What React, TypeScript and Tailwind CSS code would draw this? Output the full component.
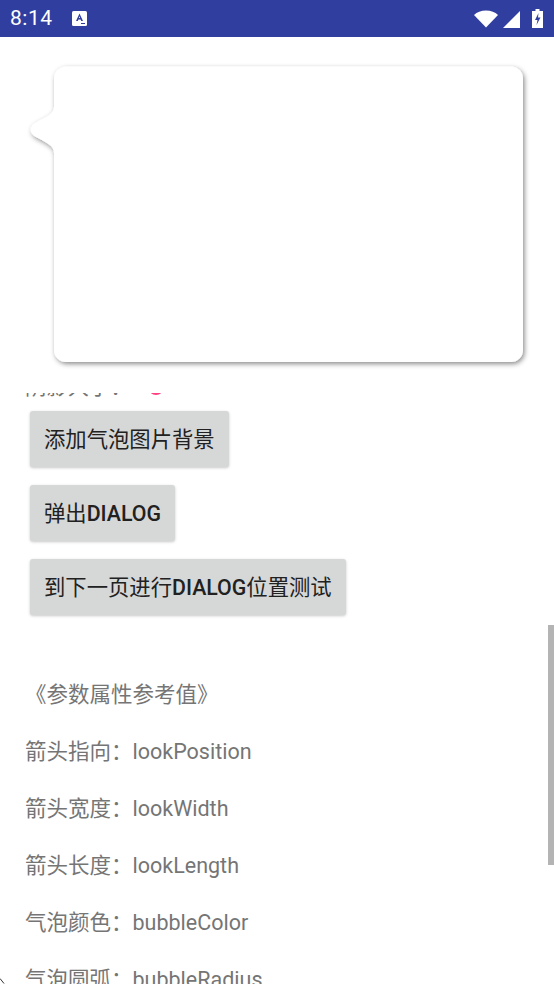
const FONT = "font-['Roboto','Noto_Sans_CJK_SC',sans-serif]";

const COLON = '\uFF1A';

const PARAMS = [
  ['箭头指向', 'lookPosition'],
  ['箭头宽度', 'lookWidth'],
  ['箭头长度', 'lookLength'],
  ['气泡颜色', 'bubbleColor'],
  ['气泡圆弧', 'bubbleRadius'],
];

function StatusBar() {
  return (
    <div className="h-[37px] shrink-0 bg-[#303f9f] flex items-center pl-[10px] pr-[11px] text-white">
      <span className="text-[21px] leading-none tracking-[0.5px]">8:14</span>
      <svg className="ml-[19px]" width="15" height="15" viewBox="0 0 15 15">
        <rect width="15" height="15" rx="1.5" fill="#fff" />
        <path d="M7.5 2.5 4 10h1.8l.6-1.5h2.2l.6 1.5H11L7.5 2.5Zm-.6 4.6.6-1.8.6 1.8H6.900Z" fill="#303f9f" />
        <rect x="9" y="12" width="4" height="1" fill="#303f9f" />
      </svg>
      <div className="ml-auto flex items-center">
        <svg width="24" height="18" viewBox="0 0 24 18">
          <path d="M0 5C3 2 7 .5 12 .5S21 2 24 5L12 17.500 0 5Z" fill="#fff" />
        </svg>
        <svg className="ml-[5px]" width="17" height="18" viewBox="0 0 17 18">
          <path d="M0 18 17 1v17H0Z" fill="#fff" />
        </svg>
        <svg className="ml-[12px]" width="11" height="19" viewBox="0 0 11 19">
          <path d="M3.500 0h4v2H11v17H0V2h3.500V0Z" fill="#fff" />
          <path d="M6.500 4 3 11h2.500L4.500 16 8.500 8.500H6L6.500 4Z" fill="#303f9f" />
        </svg>
      </div>
    </div>
  );
}

function Bubble() {
  return (
    <svg className="ml-[24px] mt-[24px] overflow-visible" width="504" height="306" viewBox="0 0 504 306">
      <defs>
        <filter id="bubble-shadow" x="-5%" y="-5%" width="110%" height="110%">
          <feDropShadow dx="1.500" dy="2" stdDeviation="2.500" floodColor="#000" floodOpacity="0.45" />
        </filter>
      </defs>
      <path
        d="M42 5.500H487a12 12 0 0 1 12 12V289a12 12 0 0 1-12 12H42a12 12 0 0 1-12-12V92C30 84 21 81 12 76 5 72 5 66 11 62 19 57 30 54 30 46V17.500A12 12 0 0 1 42 5.500Z"
        fill="#fff"
        filter="url(#bubble-shadow)"
      />
    </svg>
  );
}

function RaisedButton({ children }: { children: React.ReactNode }) {
  return (
    <button className="h-[56px] px-[14px] pt-[2px] rounded-[3px] bg-[#d6d7d7] text-[21.33px] text-[#212121] shadow-[0_1px_3px_rgba(0,0,0,0.22)]">
      {children}
    </button>
  );
}

export default function App() {
  return (
    <div className={`${FONT} relative h-[984px] w-[554px] overflow-hidden bg-white flex flex-col`}>
      <StatusBar />

      {/* Bubble preview */}
      <div className="h-[356px] shrink-0 bg-white relative z-10">
        <Bubble />
      </div>

      {/* Scrolled settings */}
      <div className="flex-1 overflow-hidden">
        <div className="-mt-[20px] pl-[25px] h-[28px] flex items-center text-[21.33px] leading-[28px] text-[#757575]">
          阴影大小{COLON}
          <span className="ml-[16px] w-[16px] h-[16px] rounded-full bg-[#ff4081]" />
        </div>

        <div className="mt-[10px] ml-[30px] flex flex-col items-start gap-[18px]">
          <RaisedButton>添加气泡图片背景</RaisedButton>
          <RaisedButton>
            弹出<span className="font-medium">DIALOG</span>
          </RaisedButton>
          <RaisedButton>
            到下一页进行<span className="font-medium">DIALOG</span>位置测试
          </RaisedButton>
        </div>

        <div className="mt-[66px] pl-[25px] flex flex-col gap-[29px] text-[21.5px] leading-[28px] text-[#757575]">
          <p>《参数属性参考值》</p>
          {PARAMS.map(([name, value]) => (
            <p key={value}>
              {name}
              {COLON}
              {value}
            </p>
          ))}
        </div>
      </div>

      {/* Scrollbar */}
      <div className="absolute right-0 top-[625px] h-[240px] w-[6px] bg-[#b4b4b4]" />

      {/* Corner of something cut by the page edge */}
      <svg className="absolute left-0 bottom-0" width="6" height="7" viewBox="0 0 6 7">
        <path d="M0 1.500 4 6.500" stroke="#333" strokeWidth="1" fill="none" />
      </svg>
    </div>
  );
}
